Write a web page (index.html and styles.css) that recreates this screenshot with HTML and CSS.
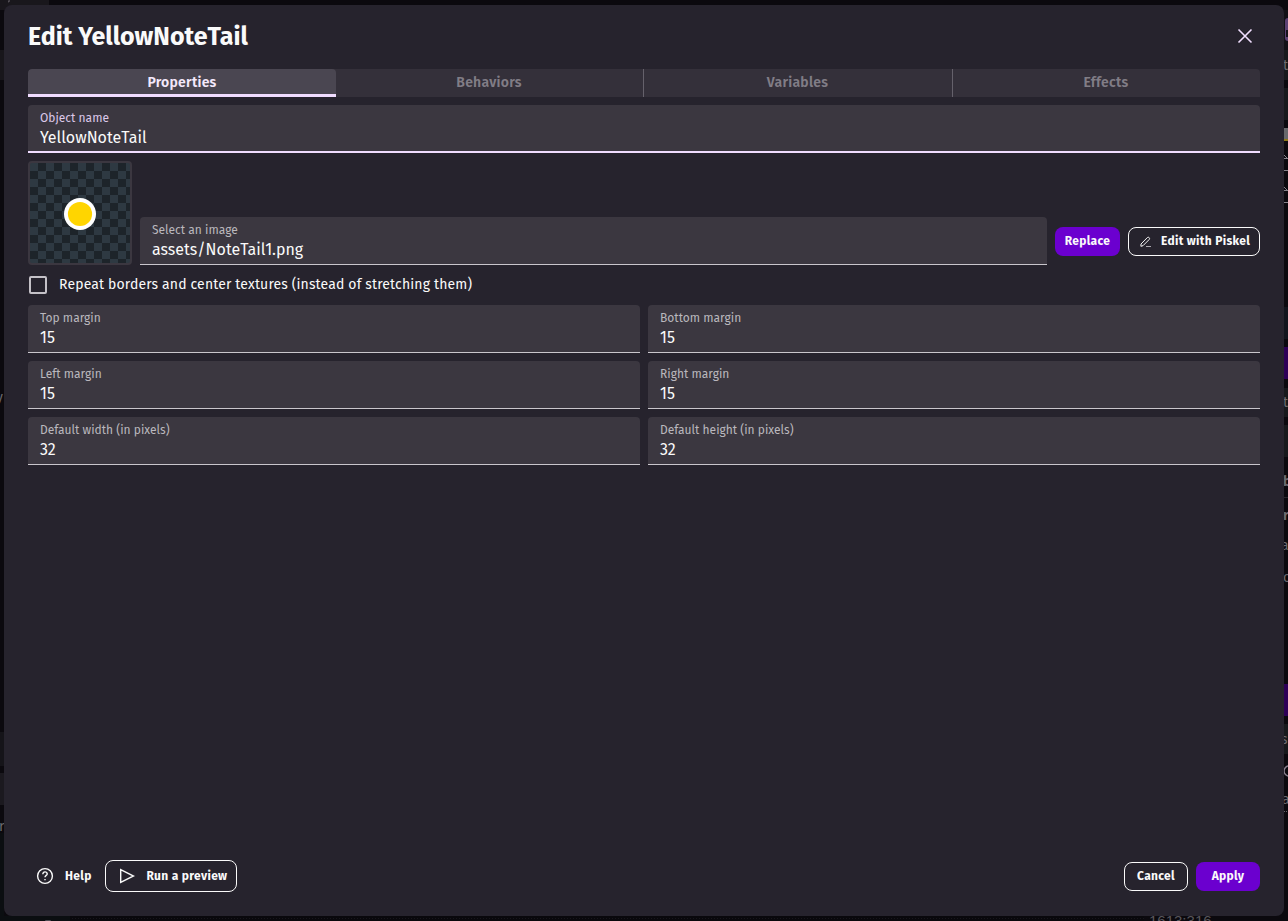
FILE: index.html
```html
<!DOCTYPE html>
<html lang="en">
<head>
<meta charset="utf-8">
<title>Edit YellowNoteTail</title>
<link rel="stylesheet" href="styles.css">
</head>
<body>
<div class="workspace" aria-hidden="true">
  <svg width="1288" height="921" viewBox="0 0 1288 921">
    <defs>
      <pattern id="grid" width="3" height="3" patternUnits="userSpaceOnUse"><rect width="3" height="3" fill="#09080c"/><path d="M0 0h1v1H0z" fill="#17161b"/></pattern>
    </defs>
    <rect width="49" height="10" fill="#19171c"/>
    <path d="M9 0q1 2-1 2" stroke="#68646b" fill="none"/>
    <rect y="50" width="4" height="30" fill="#18161b"/>
    <rect y="732" width="4" height="34" fill="#151419"/>
    <rect y="773" width="4" height="32" fill="#1b191f"/>
    <rect y="833" width="4" height="88" fill="#0b0e11"/>
    <rect x="0" y="916" width="70" height="5" fill="#0b0e11"/>
    <rect x="70" y="916" width="1074" height="5" fill="url(#grid)"/>
    <rect x="45" y="920" width="6" height="1" rx="1" fill="#4f4c54"/>
    <rect x="1284" y="10" width="4" height="40" fill="#121116"/>
    <rect x="1285" y="18" width="10" height="23" rx="3" fill="#5c4173"/>
    <rect x="1286" y="30" width="2" height="7" fill="#15121a"/>
    <g fill="#17191c">
      <rect x="1284" y="50" width="4" height="30"/>
      <rect x="1284" y="88" width="4" height="32"/>
      <rect x="1284" y="388" width="4" height="29"/>
      <rect x="1284" y="425" width="4" height="32"/>
      <rect x="1284" y="724" width="4" height="30"/>
    </g>
    <rect x="1284" y="128" width="4" height="12" fill="#68686b"/>
    <rect x="1284" y="139" width="4" height="2" fill="#8c7816"/>
    <path d="M1284 155l3 3M1284 158.500h4M1284 187l3 3M1284 190.500h4" stroke="#85828a"/>
    <path d="M1284 170.500h4M1284 202.500h4" stroke="#85828a"/>
    <rect x="1284" y="307" width="4" height="32" fill="#12151d"/>
    <rect x="1284" y="347" width="4" height="32" fill="#2e0057"/>
    <rect x="1284" y="684" width="4" height="32" fill="#2e0057"/>
    <path d="M1284 497.500h4" stroke="#29272d"/>
    <path d="M1284 811.500h4" stroke="#68646b" stroke-dasharray="1 1"/>
    <g class="workspace-text">
      <text x="-4" y="402">y</text>
      <text x="-1" y="831">r</text>
      <text x="1283" y="70">t</text>
      <text x="1283" y="407">t</text>
      <text x="1283" y="486" class="strong">b</text>
      <text x="1283" y="520" class="strong">r</text>
      <text x="1281" y="550">a</text>
      <text x="1283" y="582">o</text>
      <text x="1281" y="744">s</text>
      <text x="1282" y="804">a</text>
      <text x="1149" y="926" class="coords">1613:316</text>
    </g>
    <circle cx="1289" cy="771" r="5" fill="none" stroke="#89808e" stroke-width="1.500"/>
  </svg>
</div>

<main class="dialog" role="dialog" aria-label="Edit YellowNoteTail">
  <header class="dialog-header">
    <h1 class="title">Edit YellowNoteTail</h1>
    <button class="close" aria-label="Close"><svg width="16" height="16" viewBox="0 0 16 16"><path d="M1.500 1.500 14.500 14.500M14.500 1.500 1.500 14.500"/></svg></button>
  </header>

  <nav class="tabs">
    <button class="tab active">Properties</button>
    <button class="tab tab-behaviors">Behaviors</button>
    <button class="tab">Variables</button>
    <button class="tab tab-effects">Effects</button>
  </nav>

  <section class="content">
    <div class="field focused"><span class="label">Object name</span><span class="value">YellowNoteTail</span></div>

    <div class="image-row">
      <div class="preview"><svg width="32" height="32" viewBox="0 0 32 32"><circle cx="16" cy="16" r="16" fill="#fff"/><circle cx="16" cy="16" r="12.100" fill="#ffd500"/></svg></div>
      <div class="field image-field"><span class="label">Select an image</span><span class="value">assets/NoteTail1.png</span></div>
      <button class="button primary replace">Replace</button>
      <button class="button outlined piskel">
        <svg width="12" height="12" viewBox="0 0 12 12"><path d="M1 8 7.400 1.500Q8.300.800 9.200 1.700 10 2.600 9.200 3.500L3 9.700.900 10.300Z"/><path class="faint" d="M6 10.500h5"/></svg>
        <span>Edit with Piskel</span>
      </button>
    </div>

    <label class="check"><span class="box"></span><span class="check-label">Repeat borders and center textures (instead of stretching them)</span></label>

    <div class="grid">
      <div class="field"><span class="label">Top margin</span><span class="value">15</span></div>
      <div class="field"><span class="label">Bottom margin</span><span class="value">15</span></div>
      <div class="field"><span class="label">Left margin</span><span class="value">15</span></div>
      <div class="field"><span class="label">Right margin</span><span class="value">15</span></div>
      <div class="field"><span class="label">Default width (in pixels)</span><span class="value">32</span></div>
      <div class="field"><span class="label">Default height (in pixels)</span><span class="value">32</span></div>
    </div>
  </section>

  <footer class="actions">
    <button class="button help">
      <svg width="18" height="18" viewBox="0 0 18 18"><circle cx="9" cy="9" r="7.400"/><path d="M6.800 7.200Q7 4.900 9 4.900T11.200 6.900C11.200 8.400 9 8.400 9 10.200M9 11.900v1.300"/></svg>
      <span>Help</span>
    </button>
    <button class="button outlined run">
      <svg width="16" height="16" viewBox="0 0 16 16"><path d="M1.700 1.700v12.600L14.600 8Z"/></svg>
      <span>Run a preview</span>
    </button>
    <span class="spacer"></span>
    <button class="button outlined cancel">Cancel</button>
    <button class="button primary apply">Apply</button>
  </footer>
</main>
</body>
</html>
```

FILE: styles.css
```css
* { box-sizing: border-box; }

body {
  margin: 0;
  height: 921px;
  overflow: hidden;
  padding: 5px 4px;
  background: #0b090e;
  color: #fafafa;
  font-family: "Fira Sans", "Noto Sans", sans-serif;
}

button {
  font: inherit;
  color: inherit;
  background: none;
  border: 0;
  padding: 0;
}

svg { display: block; flex: none; fill: none; }

/* Editor visible around the edges of the dialog */
.workspace { position: absolute; inset: 0; overflow: hidden; }
.workspace-text { fill: #6c6970; font-size: 14px; }
.workspace-text .strong { font-weight: 700; }
.workspace-text .coords { font-family: "Liberation Sans", sans-serif; font-size: 15px; fill: #58565b; letter-spacing: 0; }

.dialog {
  position: relative;
  display: flex;
  flex-direction: column;
  height: 911px;
  padding: 0 24px 24px;
  border-radius: 8px;
  background: #26232d;
}

.dialog-header {
  display: flex;
  align-items: center;
  justify-content: space-between;
  height: 64px;
  padding: 0 7px 2px 0;
}
.title {
  margin: 2px 0 0;
  font-size: 25px;
  line-height: 32px;
  font-weight: 700;
  white-space: nowrap;
}
.close svg { stroke: #f1dfff; stroke-width: 1.600; }

.tabs {
  display: grid;
  grid-template-columns: repeat(4, 1fr);
  height: 28px;
  border-radius: 4px 4px 0 0;
  background: #34303a;
  overflow: hidden;
}
.tab {
  color: #817d86;
  font-size: 14px;
  line-height: 26px;
  padding: 0 1px 0 0;
  font-weight: 600;
  letter-spacing: 0.250px;
}
.tab.active {
  border-bottom: 3px solid #f0dcff;
  border-radius: 4px 4px 0 0;
  padding: 2px 0 0;
  line-height: 23px;
  background: #4a4651;
  color: #f3e8fb;
}
.tab-behaviors { border-right: 1px solid #65616b; }
.tab-effects { border-left: 1px solid #65616b; }

.content { display: flex; flex-direction: column; gap: 8px; padding-top: 8px; }

.field {
  display: flex;
  flex-direction: column;
  height: 48px;
  padding: 5px 12px 0;
  border-bottom: 1px solid #c9c6cc;
  border-radius: 4px 4px 0 0;
  background: #3b3740;
  white-space: nowrap;
}
.label { font-size: 12px; line-height: 16px; color: #bab7bd; }
.value { font-size: 16px; line-height: 24px; }
.focused { border-bottom: 2px solid #f0dcff; }
.focused .label { color: #dcc8e9; }

.image-row { display: flex; gap: 8px; align-items: flex-end; height: 104px; }
.preview {
  display: grid;
  place-items: center;
  width: 104px;
  height: 104px;
  padding-top: 1px;
  border: 2px solid #3b3740;
  border-radius: 4px;
  background: repeating-conic-gradient(#1d242a 0 25%, #2e3942 0 50%) 0 0 / 16px 16px;
}
.image-field { flex: 1; }

.button {
  display: flex;
  align-items: center;
  justify-content: center;
  height: 29px;
  border-radius: 8px;
  font-size: 12px;
  line-height: 20px;
  font-weight: 700;
  letter-spacing: 0.330px;
  padding-bottom: 1px;
  white-space: nowrap;
}
.primary { background: #6b00cf; }
.outlined { border: 1px solid #fafafa; }
.replace { width: 65px; margin-bottom: 9px; }
.piskel { width: 132px; margin-bottom: 9px; justify-content: flex-start; padding-left: 11px; gap: 9px; }
.piskel svg { stroke: #f5f5f5; stroke-width: 1; margin-top: 2px; }
.piskel .faint { stroke: #aaa7ae; }

.check { display: flex; align-items: center; gap: 12px; height: 24px; padding-left: 1px; }
.box { width: 18px; height: 18px; border: 2px solid #c4c1c7; border-radius: 2px; }
.check-label { font-size: 14px; line-height: 20px; letter-spacing: 0.140px; white-space: nowrap; }

.grid { display: grid; grid-template-columns: 1fr 1fr; gap: 8px; }

.actions { display: flex; align-items: center; gap: 8px; height: 32px; margin-top: auto; }
.spacer { flex: 1; }
.help { width: 69px; gap: 11px; justify-content: flex-start; padding-left: 8px; }
.help svg, .run svg { stroke: #fafafa; stroke-width: 1.400; }
.run { width: 132px; height: 32px; justify-content: flex-start; padding-left: 13px; gap: 11.400px; }
.cancel { width: 64px; }
.apply { width: 64px; }
```
